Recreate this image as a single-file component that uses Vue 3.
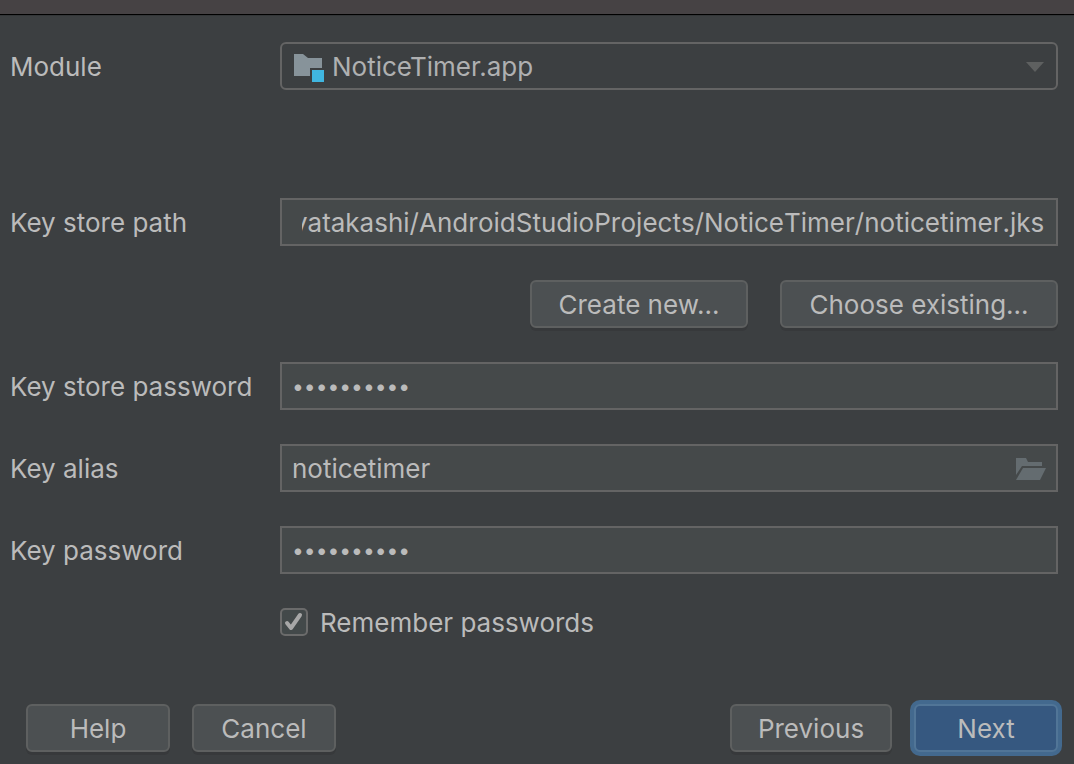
<script setup>
import { nextTick, onMounted, ref } from 'vue'

const moduleName = ref('NoticeTimer.app')
const storePath = ref('yatakashi/AndroidStudioProjects/NoticeTimer/noticetimer.jks')
const storePassword = ref('keystore10')
const keyAlias = ref('noticetimer')
const keyPassword = ref('keyalias10')
const remember = ref(true)
const pathInput = ref(null)

// Keep the file name at the end of the path in view.
onMounted(async () => {
  await nextTick()
  pathInput.value.scrollLeft = pathInput.value.scrollWidth
})
</script>

<template>
  <main class="dialog">
    <div class="titlebar"></div>
    <form class="form" @submit.prevent>
      <div class="row module">
        <label for="module">Module</label>
        <div class="control">
          <select id="module" v-model="moduleName" class="field combo">
            <option>NoticeTimer.app</option>
          </select>
          <svg class="folder" width="32" height="28" viewBox="0 0 32 28" aria-hidden="true">
            <path d="M0 0H9L14 4H28V14H16V22H0Z" fill="#87939a" />
            <path d="M18 16H30V28H18Z" fill="#40b6e0" />
          </svg>
          <svg class="arrow" width="18" height="10" viewBox="0 0 18 10" aria-hidden="true">
            <path d="M0 0H18L9 10Z" fill="#5e6060" />
          </svg>
        </div>
      </div>

      <div class="row">
        <label for="path">Key store path</label>
        <input id="path" ref="pathInput" v-model="storePath" class="field path" type="text" spellcheck="false" />
      </div>

      <div class="row-actions">
        <button type="button" class="button create">Create new...</button>
        <button type="button" class="button choose">Choose existing...</button>
      </div>

      <div class="row">
        <label for="store-password">Key store password</label>
        <input id="store-password" v-model="storePassword" class="field secret" type="password" />
      </div>

      <div class="row">
        <label for="alias">Key alias</label>
        <div class="control">
          <input id="alias" v-model="keyAlias" class="field plain" type="text" spellcheck="false" />
          <button type="button" class="browse" aria-label="Browse key aliases">
            <svg width="30" height="22" viewBox="0 0 30 22" aria-hidden="true">
              <path d="M0 0H10L12 4H26V8H6L0 17Z" fill="#646c70" />
              <path d="M7 10H30L24 22H0Z" fill="#646c70" />
            </svg>
          </button>
        </div>
      </div>

      <div class="row">
        <label for="key-password">Key password</label>
        <input id="key-password" v-model="keyPassword" class="field secret" type="password" />
      </div>

      <label class="remember">
        <span class="tick">
          <input v-model="remember" type="checkbox" />
          <svg v-if="remember" width="28" height="28" viewBox="0 0 28 28" aria-hidden="true">
            <path d="M7 15L11 20L20 7" />
          </svg>
        </span>
        <span class="caption">Remember passwords</span>
      </label>
    </form>

    <footer class="footer">
      <button type="button" class="button">Help</button>
      <button type="button" class="button">Cancel</button>
      <button type="button" class="button previous">Previous</button>
      <button type="button" class="button primary">Next</button>
    </footer>
  </main>
</template>

<style>
body {
  background: #3c3f41;
}
</style>

<style scoped>
.dialog,
.dialog * {
  box-sizing: border-box;
}

.dialog {
  display: flex;
  flex-direction: column;
  min-height: 100vh;
  background: #3c3f41;
  color: #bbbbbb;
  font-family: Inter, "Liberation Sans", sans-serif;
  font-size: 26px;
  line-height: 32px;
}

.titlebar {
  height: 16px;
  background: #464244;
  border-bottom: 1px solid #333638;
  box-shadow: inset 0 -1px #000000;
}

.form {
  display: flex;
  flex-direction: column;
  gap: 34px;
  padding: 26px 16px 0 10px;
}

.row {
  display: grid;
  grid-template-columns: 270px 1fr;
  align-items: center;
}

.row label,
.caption {
  padding-top: 2px;
}

.module {
  margin-bottom: 74px;
}

.control {
  display: grid;
  position: relative;
}

.field {
  width: 100%;
  min-width: 0;
  height: 48px;
  margin: 0;
  padding: 0 10px;
  border: 2px solid #646464;
  border-radius: 0;
  outline: none;
  background: #45494a;
  color: inherit;
  font: inherit;
}

.combo {
  appearance: none;
  padding: 2px 50px 0;
  border-radius: 6px;
  background: #3c3f41;
  color: #afb0b1;
}

.path,
.plain {
  font-kerning: none;
  font-optical-sizing: none;
}

.path {
  padding-right: 12px;
  padding-left: 20px;
  text-align: right;
}

.secret {
  font-size: 21px;
}

.folder,
.arrow {
  position: absolute;
  pointer-events: none;
}

.folder {
  top: 12px;
  left: 14px;
}

.arrow {
  top: 20px;
  right: 14px;
}

.browse {
  position: absolute;
  top: 14px;
  right: 12px;
  display: flex;
  padding: 0;
  border: 0;
  background: none;
}

.button {
  width: 144px;
  height: 48px;
  padding: 2px 0 0;
  border: 2px solid #5e6060;
  border-radius: 6px;
  background: #4c5052;
  box-shadow: 0 3px #37393b;
  color: inherit;
  font: inherit;
}

.row-actions {
  display: flex;
  justify-content: flex-end;
  gap: 32px;
}

.create {
  width: 218px;
}

.choose {
  width: 278px;
}

.remember {
  display: flex;
  align-items: center;
  align-self: flex-start;
  gap: 12px;
  height: 28px;
  margin-left: 270px;
}

.tick {
  display: grid;
}

.tick > * {
  grid-area: 1 / 1;
}

.tick input {
  appearance: none;
  width: 28px;
  height: 28px;
  margin: 0;
  border: 2px solid #6b6b6b;
  border-radius: 5px;
  background: #43494a;
}

.tick svg {
  fill: none;
  stroke: #a7a7a7;
  stroke-width: 4;
  stroke-linecap: round;
  stroke-linejoin: round;
  pointer-events: none;
}

.footer {
  display: flex;
  gap: 22px;
  margin-top: auto;
  padding: 0 16px 12px 26px;
}

.previous {
  width: 162px;
  margin-left: auto;
}

.primary {
  border-color: #517597;
  background: #365880;
  box-shadow: 0 0 0 4px #43698e;
}
</style>
